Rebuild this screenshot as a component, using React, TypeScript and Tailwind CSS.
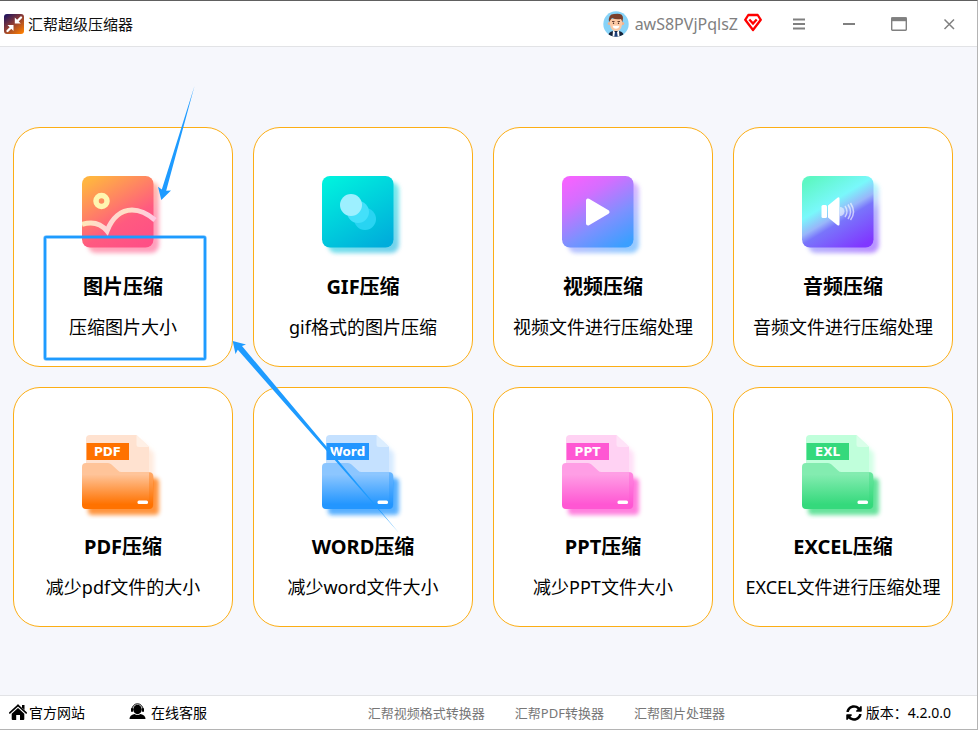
import { useId } from "react";
import type { ReactNode } from "react";
import { FaSyncAlt } from "react-icons/fa";

type CardItem = { title: string; desc: string; icon: ReactNode };

/** Rounded square tile with a diagonal gradient and a blurred copy of itself as shadow */
function Tile({ stops, children }: { stops: [string, string][]; children: ReactNode }) {
  const id = useId();
  return (
    <svg width="82" height="84" viewBox="0 0 82 84" fill="none" aria-hidden="true">
      <defs>
        <linearGradient id={`${id}g`} x1="0.2" y1="0" x2="0.8" y2="1">
          {stops.map(([offset, color]) => (
            <stop key={offset} offset={offset} stopColor={color} />
          ))}
        </linearGradient>
        <filter id={`${id}b`} x="-20%" y="-20%" width="140%" height="140%">
          <feGaussianBlur stdDeviation="2" />
        </filter>
      </defs>
      <rect x="6" y="7" width="71" height="71" rx="8" fill={`url(#${id}g)`} opacity="0.55" filter={`url(#${id}b)`} />
      <rect y="1" width="71.5" height="71.5" rx="8" fill={`url(#${id}g)`} />
      {children}
    </svg>
  );
}

/** Folder with a document behind it and a file type label */
function Folder({ label, main, top, paper, fold }: {
  label: string;
  main: string;
  top: string;
  paper: string;
  fold: string;
}) {
  const id = useId();
  const body = "M0 32a4 4 0 0 1 4-4h22q2 0 3.500 1.500l6.500 6q1.500 1.500 3.500 1.500h27.500a4 4 0 0 1 4 4v29a4 4 0 0 1-4 4h-63a4 4 0 0 1-4-4z";
  const sheet = "M4 4a4 4 0 0 1 4-4h46.500L67 12v50H4z";
  return (
    <svg width="82" height="84" viewBox="0 0 82 84" fill="none" aria-hidden="true">
      <defs>
        <linearGradient id={`${id}g`} x1="0" y1="28" x2="0" y2="74" gradientUnits="userSpaceOnUse">
          <stop offset="0" stopColor={top} />
          <stop offset="0.25" stopColor={top} />
          <stop offset="0.9" stopColor={main} />
        </linearGradient>
        <filter id={`${id}b`} x="-20%" y="-20%" width="140%" height="140%">
          <feGaussianBlur stdDeviation="2" />
        </filter>
      </defs>
      <path d={sheet} fill={paper} opacity="0.7" transform="translate(5 6)" filter={`url(#${id}b)`} />
      <rect x="6" y="43" width="71" height="37" rx="4" fill={main} opacity="0.75" filter={`url(#${id}b)`} />
      <path d={sheet} fill={paper} />
      <path d="M54.500 0L67 12H57a2.500 2.500 0 0 1-2.500-2.500z" fill={fold} />
      <path d={body} fill={`url(#${id}g)`} />
      <path d="M67 37.500q4.500 0 4.500 4v28q0 4-4.500 4.500z" fill={main} opacity="0.35" />
      <rect x="4.500" y="8" width="42.500" height="17" fill={main} />
      <text
        x="25.500"
        y="21"
        textAnchor="middle"
        fontSize="12"
        className="font-['DejaVu_Sans',sans-serif] font-bold"
        fill="#fff"
      >
        {label}
      </text>
      <rect x="55.500" y="65.500" width="10.500" height="3.500" rx="1.500" fill="#fff" />
    </svg>
  );
}

function ImageIcon() {
  return (
    <Tile stops={[["0", "#ffb441"], ["0.65", "#ff5a80"], ["1", "#ff4f86"]]}>
      <defs>
        <linearGradient id="hills" x1="0" y1="0" x2="74" y2="0" gradientUnits="userSpaceOnUse">
          <stop offset="0" stopColor="#ffe9b8" />
          <stop offset="0.34" stopColor="#ffd3d4" />
          <stop offset="0.6" stopColor="#ffe0c4" />
          <stop offset="1" stopColor="#ffc6e4" />
        </linearGradient>
      </defs>
      <circle cx="19.500" cy="26" r="5.500" stroke="#fff6b0" strokeWidth="5.500" />
      <path
        d="M0 49.500c9-3 18-2 25 6.500C30 43 39 35 50 35c9 0 16 4 23 10"
        stroke="url(#hills)"
        strokeWidth="5"
      />
    </Tile>
  );
}

function GifIcon() {
  return (
    <Tile stops={[["0", "#00f0de"], ["1", "#00addb"]]}>
      <circle cx="43" cy="44" r="11" fill="#28d4f2" />
      <circle cx="36" cy="37" r="11" fill="#43e0fa" />
      <circle cx="29" cy="30" r="11" fill="#9df0ff" />
    </Tile>
  );
}

function VideoIcon() {
  return (
    <Tile stops={[["0", "#f364ff"], ["0.25", "#d46eff"], ["0.65", "#7c91ff"], ["1", "#3b9fff"]]}>
      <path d="M26 25.500v23l19.500-11.500z" fill="#fff" stroke="#fff" strokeWidth="4" strokeLinejoin="round" />
    </Tile>
  );
}

function AudioIcon() {
  return (
    <Tile stops={[["0", "#5ef7c4"], ["0.36", "#79f8fb"], ["0.53", "#98b6fa"], ["0.62", "#7975fb"], ["1", "#8037ff"]]}>
      <rect x="19.500" y="30" width="5.500" height="13" rx="1.500" fill="#fff" />
      <path d="M26 30.500l9.500-7.800q2-1 2 1v25.500q0 2-2 1L26 42.500z" fill="#fff" />
      <path d="M38 32a4.500 4.500 0 0 1 0 9z" fill="#fff" opacity="0.55" />
      <path d="M43 31q4 5.500 0 11M46 29.500q5 7.500 0 14.500M48.500 28q6 9 0 17" stroke="#fff" strokeWidth="1.500" opacity="0.6" />
    </Tile>
  );
}

const CARDS: CardItem[] = [
  { title: "图片压缩", desc: "压缩图片大小", icon: <ImageIcon /> },
  { title: "GIF压缩", desc: "gif格式的图片压缩", icon: <GifIcon /> },
  { title: "视频压缩", desc: "视频文件进行压缩处理", icon: <VideoIcon /> },
  { title: "音频压缩", desc: "音频文件进行压缩处理", icon: <AudioIcon /> },
  {
    title: "PDF压缩",
    desc: "减少pdf文件的大小",
    icon: <Folder label="PDF" main="#ff7200" top="#ffc499" paper="#ffe2d0" fold="#fff0e6" />,
  },
  {
    title: "WORD压缩",
    desc: "减少word文件大小",
    icon: <Folder label="Word" main="#2396ff" top="#8cc6ff" paper="#c5e1ff" fold="#dceeff" />,
  },
  {
    title: "PPT压缩",
    desc: "减少PPT文件大小",
    icon: <Folder label="PPT" main="#ff57d3" top="#ff9ee5" paper="#ffd2f3" fold="#ffe3f8" />,
  },
  {
    title: "EXCEL压缩",
    desc: "EXCEL文件进行压缩处理",
    icon: <Folder label="EXL" main="#35d97c" top="#83ecb0" paper="#c0ffdb" fold="#d9ffe9" />,
  },
];

const LINKS = ["汇帮视频格式转换器", "汇帮PDF转换器", "汇帮图片处理器"];

function Logo() {
  return (
    <svg width="20" height="20" viewBox="0 0 20 20" aria-hidden="true">
      <defs>
        <linearGradient id="logo" x1="0.1" y1="0" x2="0.9" y2="1">
          <stop offset="0" stopColor="#1d1360" />
          <stop offset="0.45" stopColor="#8a3a35" />
          <stop offset="1" stopColor="#ff8000" />
        </linearGradient>
      </defs>
      <rect width="20" height="20" rx="3" fill="url(#logo)" />
      <path d="M17 3.500l-4 4M3.500 17l4-4" stroke="#fff" strokeWidth="2.400" strokeLinecap="round" />
      <path d="M10.800 3.500V9.500h6zM3.500 11H9.500v6z" fill="#fff" />
    </svg>
  );
}

function Avatar() {
  return (
    <svg width="26" height="26" viewBox="0 0 26 26" aria-hidden="true">
      <clipPath id="face">
        <circle cx="13" cy="13" r="12.700" />
      </clipPath>
      <g clipPath="url(#face)">
        <rect width="26" height="26" fill="#87d3f8" />
        <path d="M5 26q0-5 5-6h6q5 1 5 6z" fill="#16233a" />
        <path d="M10 19.500l3 2 3-2 .500 6.500h-7z" fill="#fff" />
        <path d="M12 21h2l.800 5h-3.600z" fill="#1d3f78" />
        <circle cx="6.300" cy="12.500" r="1.600" fill="#f3b28c" />
        <circle cx="19.700" cy="12.500" r="1.600" fill="#f3b28c" />
        <path d="M7 8h12v6q-1 6-6 6t-6-6z" fill="#fcc9a4" />
        <path d="M6 11q-1-8 5-8 9-1.500 9 4l-.500 4-1.500-3q-5 1-9-1z" fill="#7a3f2b" />
        <path d="M9 10.500h2.500M14.500 10.500H17" stroke="#5b2f22" strokeWidth="0.900" />
        <circle cx="10.500" cy="12.200" r="0.700" fill="#3a2019" />
        <circle cx="15.500" cy="12.200" r="0.700" fill="#3a2019" />
        <path d="M9.500 14.800h7q-.700 3-3.500 3t-3.500-3z" fill="#fff" />
      </g>
    </svg>
  );
}

function GemIcon() {
  return (
    <svg width="18" height="22" viewBox="0 0 18 22" fill="none" stroke="#ff0000" strokeWidth="2.300" aria-hidden="true">
      <path d="M4.300 2h9.400l3.100 4.800L9 17 1.200 6.800z" strokeLinejoin="round" />
      <path d="M5.300 6.500L9 10.500l3.700-4" />
    </svg>
  );
}

function HomeIcon() {
  return (
    <svg width="18" height="20" viewBox="0 0 18 20" aria-hidden="true">
      <path d="M9 2.300l-8.200 7.600" stroke="#000" strokeWidth="1.600" strokeLinecap="round" />
      <path d="M9 2.300l8.200 7.600" stroke="#000" strokeWidth="1.600" strokeLinecap="round" />
      <path d="M13 2h2.500v5L13 4.500z" />
      <path d="M9 5l6.300 5.800V16q0 1-1 1H11v-5H7.200v5H3.700q-1 0-1-1v-5.200z" />
    </svg>
  );
}

function ServiceIcon() {
  return (
    <svg width="17" height="19" viewBox="0 0 17 19" aria-hidden="true">
      <path d="M3 6.500a5.500 5.700 0 0 1 11 0" fill="none" stroke="#000" strokeWidth="1" />
      <ellipse cx="8.500" cy="6.500" rx="4.300" ry="4.700" />
      <rect x="2" y="5" width="2" height="4" rx="1" />
      <rect x="13" y="5" width="2" height="4" rx="1" />
      <path d="M.500 16q0-4 5-5 3 2 6 0 5 1 5 5z" />
    </svg>
  );
}

const WINDOW_BUTTONS = [
  {
    label: "菜单",
    icon: <path d="M2 3.500h12M2 8h12M2 12.500h12" strokeWidth="2" />,
  },
  { label: "最小化", icon: <path d="M2 8h12" strokeWidth="2" /> },
  {
    label: "最大化",
    icon: (
      <>
        <rect x="0.700" y="2" width="14.600" height="12.300" rx="0.700" strokeWidth="1.400" />
        <path d="M0.500 3.200h15" strokeWidth="4" />
      </>
    ),
  },
  { label: "关闭", icon: <path d="M3.500 3.500l9.500 9.500M13 3.500l-9.500 9.500" strokeWidth="1.500" /> },
];

function Header() {
  return (
    <header className="flex h-[46px] items-center border-b border-[#e2e3e6] bg-white pr-[3px] pl-1">
      <Logo />
      <h1 className="ml-1 text-[15px] leading-5 text-[#111]">汇帮超级压缩器</h1>
      <div className="ml-auto flex items-center gap-1.5">
        <Avatar />
        <span className="text-base leading-6 text-[#808080]">awS8PVjPqlsZ</span>
        <GemIcon />
      </div>
      <nav className="ml-3 flex">
        {WINDOW_BUTTONS.map((b) => (
          <button key={b.label} type="button" aria-label={b.label} className="grid h-11 w-[50px] place-items-center">
            <svg width="16" height="16" viewBox="0 0 16 16" fill="none" stroke="#808080">
              {b.icon}
            </svg>
          </button>
        ))}
      </nav>
    </header>
  );
}

function Card({ item }: { item: CardItem }) {
  return (
    <button
      type="button"
      className="flex h-60 flex-col items-center rounded-[27px] border border-[#fcae15] bg-white pt-[47px] text-black"
    >
      {item.icon}
      <span className="mt-3.5 text-xl leading-7 font-bold whitespace-nowrap">{item.title}</span>
      <span className="mt-3 text-lg leading-7 whitespace-nowrap">{item.desc}</span>
    </button>
  );
}

/** Guide marks drawn over the cards: a frame and two tapered arrows */
function Marks() {
  return (
    <svg className="pointer-events-none absolute top-0 left-0" width="420" height="500" viewBox="0 47 420 500" aria-hidden="true">
      <rect x="45" y="237" width="160" height="122" rx="1.500" fill="none" stroke="#1e9bff" strokeOpacity="0.6" strokeWidth="3.500" />
      <rect x="45" y="237" width="160" height="122" rx="1" fill="none" stroke="#1e9bff" strokeWidth="2" />
      <path d="M194.500 86L166.200 190.800L171 190.500L161.300 200L158 186.800L161.800 189.500z" fill="#1e9bff" />
      <path d="M399 533L237.800 349.800L235.500 354L232.700 341L246 344.500L242 346z" fill="#1e9bff" />
    </svg>
  );
}

function Footer() {
  return (
    <footer className="flex h-[35px] items-center border-y border-t-[#e2e3e6] border-b-[#b4b4b4] bg-white pr-[26px] pl-[9px] text-sm leading-5 text-black">
      <a href="#home" className="flex items-center gap-0.5">
        <HomeIcon />
        官方网站
      </a>
      <a href="#service" className="ml-11 flex items-center gap-[5px]">
        <ServiceIcon />
        在线客服
      </a>
      <nav className="mx-auto flex gap-[30px] pl-10 text-[13px] text-[#777]">
        {LINKS.map((l) => (
          <a key={l} href="#product">
            {l}
          </a>
        ))}
      </nav>
      <button type="button" className="flex items-center gap-1">
        <FaSyncAlt size={16} />
        版本：4.2.0.0
      </button>
    </footer>
  );
}

export default function App() {
  return (
    <div className="flex min-h-screen flex-col border-t border-r border-t-[#606060] border-r-[#b4b4b4] bg-white font-['Noto_Sans','Noto_Sans_CJK_SC',sans-serif]">
      <Header />
      <main className="relative flex-1 bg-[#f6f7fc] pt-20 pr-6 pb-[68px] pl-[13px]">
        <div className="grid grid-cols-4 gap-5">
          {CARDS.map((c) => (
            <Card key={c.title} item={c} />
          ))}
        </div>
        <Marks />
      </main>
      <Footer />
    </div>
  );
}
